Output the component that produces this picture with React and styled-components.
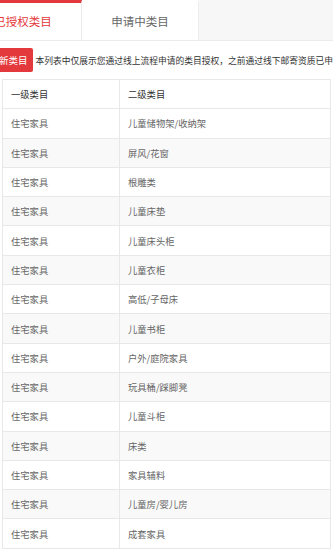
import React, {useState} from 'react'
import styled, {createGlobalStyle} from 'styled-components'

const GlobalStyle = createGlobalStyle`
    body {
        margin: 0;
        background: #fff;
        font-family: "Noto Sans CJK SC", "Noto Sans", sans-serif;
        overflow: hidden;
    }
`

const rows = [
    ['住宅家具', '儿童储物架/收纳架'],
    ['住宅家具', '屏风/花窗'],
    ['住宅家具', '根雕类'],
    ['住宅家具', '儿童床垫'],
    ['住宅家具', '儿童床头柜'],
    ['住宅家具', '儿童衣柜'],
    ['住宅家具', '高低/子母床'],
    ['住宅家具', '儿童书柜'],
    ['住宅家具', '户外/庭院家具'],
    ['住宅家具', '玩具桶/踩脚凳'],
    ['住宅家具', '儿童斗柜'],
    ['住宅家具', '床类'],
    ['住宅家具', '家具辅料'],
    ['住宅家具', '儿童房/婴儿房'],
    ['住宅家具', '成套家具'],
]

const App = () => {
    const [tab, setTab] = useState(0)
    const tabs = ['已授权类目', '申请中类目']

    return (
        <Page>
            <GlobalStyle />
            <TabBar>
                {tabs.map((t, i) => (
                    <Tab key={t} active={tab === i} onClick={() => setTab(i)}>{t}</Tab>
                ))}
                <TabRest />
            </TabBar>
            <Notice>
                <AddButton>添加新类目</AddButton>
                <NoticeText>本列表中仅展示您通过线上流程申请的类目授权，之前通过线下邮寄资质已申请的类目不在此展示</NoticeText>
            </Notice>
            <Table>
                <Row head>
                    <Cell head>一级类目</Cell>
                    <Cell head>二级类目</Cell>
                </Row>
                {rows.map((r, i) => (
                    <Row key={i} striped={i % 2 === 1}>
                        <Cell>{r[0]}</Cell>
                        <Cell>{r[1]}</Cell>
                    </Row>
                ))}
            </Table>
        </Page>
    )
}

export default App

const Page = styled.div`
    width: 333px;
    overflow: hidden;
`

const TabBar = styled.div`
    display: flex;
    height: 40px;
    margin-left: -35px;
    border-bottom: 1px solid #ececec;
`

const Tab = styled.div`
    width: 117px;
    flex-shrink: 0;
    box-sizing: border-box;
    display: flex;
    align-items: center;
    justify-content: center;
    font-size: 11.5px;
    color: ${p => p.active ? '#e4393c' : '#666'};
    background: #fff;
    border-top: 3px solid ${p => p.active ? '#e4393c' : '#fff'};
    border-right: 1px solid #ececec;
    padding-bottom: 1px;
    cursor: pointer;
`

const TabRest = styled.div`
    flex: 1;
    background: #f7f7f7;
`

const Notice = styled.div`
    display: flex;
    align-items: center;
    gap: 3px;
    height: 38px;
    margin-left: -25px;
`

const AddButton = styled.button`
    height: 24px;
    padding: 0 5px;
    border: none;
    border-radius: 2px;
    background: #e4393c;
    color: #fff;
    font-family: inherit;
    font-size: 9.5px;
    white-space: nowrap;
    flex-shrink: 0;
`

const NoticeText = styled.p`
    margin: 0;
    font-size: 8.75px;
    color: #333;
    white-space: nowrap;
`

const Table = styled.div`
    margin-left: 2px;
    width: 329px;
    box-sizing: border-box;
    border: 1px solid #e8e8e8;
    border-bottom: none;
`

const Row = styled.div`
    display: grid;
    grid-template-columns: 117px 1fr;
    height: 29.3px;
    box-sizing: border-box;
    border-bottom: 1px solid #e8e8e8;
    background: ${p => p.striped ? '#f9f9f9' : '#fff'};
`

const Cell = styled.div`
    display: flex;
    align-items: center;
    font-size: 9.3px;
    color: ${p => p.head ? '#333' : '#666'};
    padding-left: 8px;
    &:first-child {
        border-right: 1px solid #e8e8e8;
        padding-left: 8px;
    }
`
